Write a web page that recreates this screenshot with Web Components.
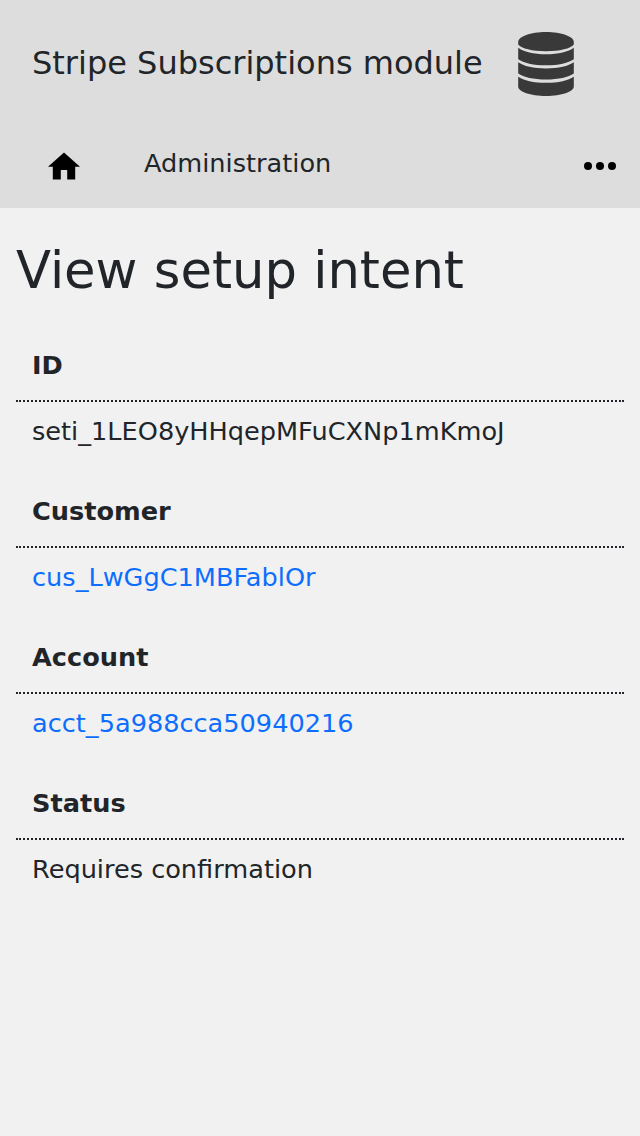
<!DOCTYPE html>
<html lang="en"><head><meta charset="utf-8"><title>View setup intent</title>
<style>html,body{margin:0;background:#f1f1f1}body{font-family:"DejaVu Sans",sans-serif;color:#212529}</style></head>
<body>
<module-header></module-header>
<main-content>
<detail-field label="ID">seti_1LEO8yHHqepMFuCXNp1mKmoJ</detail-field>
<detail-field label="Customer" linked>cus_LwGgC1MBFablOr</detail-field>
<detail-field label="Account" linked>acct_5a988cca50940216</detail-field>
<detail-field label="Status">Requires confirmation</detail-field>
</main-content>
<script>
class Base extends HTMLElement{constructor(){super();this.attachShadow({mode:'open'})}}
customElements.define('module-header',class extends Base{connectedCallback(){this.shadowRoot.innerHTML=`<style>
:host{display:block;height:208px;background:#ddd}
.brand{height:128px;box-sizing:border-box;padding:0 64px 2px 32px;display:flex;align-items:center;justify-content:space-between;font-size:32px}
.brand svg{margin-top:2px;width:60px;height:64px}
nav{height:80px;box-sizing:border-box;padding:0 24px 0 48px;display:flex;align-items:flex-start;font-size:25.6px;line-height:38px}
.home{margin:22px 64px 0 0;width:32px;height:32px}
.label{margin-top:16px;flex:1}
.more{margin-top:22px;width:32px;height:32px}
</style><div class="brand"><span>Stripe Subscriptions module</span>
<svg viewBox="0 0 60 64" fill="#393939"><path d="M2.2 10C2.2 4.500 14.500 0 30 0S57.800 4.500 57.800 10V12.500C54.500 16.500 44 19.200 30 19.200S5.500 16.500 2.200 12.500Z"/><path d="M2.200 15.700C7.500 19.800 17.500 22.200 30 22.200S52.500 19.800 57.800 15.700V27.200C52.500 31 42.500 33.300 30 33.300S7.500 31 2.200 27.200Z"/><path d="M2.200 30.300C7.500 34.100 17.500 36.500 30 36.500S52.500 34.100 57.800 30.300V41.600C52.500 45.300 42.500 47.600 30 47.600S7.500 45.300 2.200 41.600Z"/><path d="M2.200 44.700C7.500 48.500 17.500 50.800 30 50.800S52.500 48.500 57.800 44.700V54.500C57.800 59.700 45.500 64 30 64S2.200 59.700 2.200 54.500Z"/></svg></div>
<nav><svg class="home" viewBox="2 1.5 20 20"><path d="M10 20v-6h4v6h5v-8h3L12 3 2 12h3v8z"/></svg><span class="label">Administration</span>
<svg class="more" viewBox="0 0 32 32"><circle cx="4" cy="16" r="4"/><circle cx="16" cy="16" r="4"/><circle cx="28" cy="16" r="4"/></svg></nav>`}});
customElements.define('main-content',class extends Base{connectedCallback(){this.shadowRoot.innerHTML=`<style>
:host{display:block;padding:32px 16px}h1{margin:0 0 16px;font-size:51.2px;font-weight:400;line-height:61px}
</style><h1>View setup intent</h1><slot></slot>`}});
customElements.define('detail-field',class extends Base{connectedCallback(){this.shadowRoot.innerHTML=`<style>
:host{display:block;height:146px;font-size:25.6px;line-height:38px}
.label{height:85px;box-sizing:border-box;padding:29px 16px 0;border-bottom:2px dotted #212529;font-weight:700}
.value{padding:10px 16px 0}:host([linked]) .value{color:#0d6efd}
</style><div class="label">${this.getAttribute('label')}</div><div class="value"><slot></slot></div>`}});
</script></body></html>
